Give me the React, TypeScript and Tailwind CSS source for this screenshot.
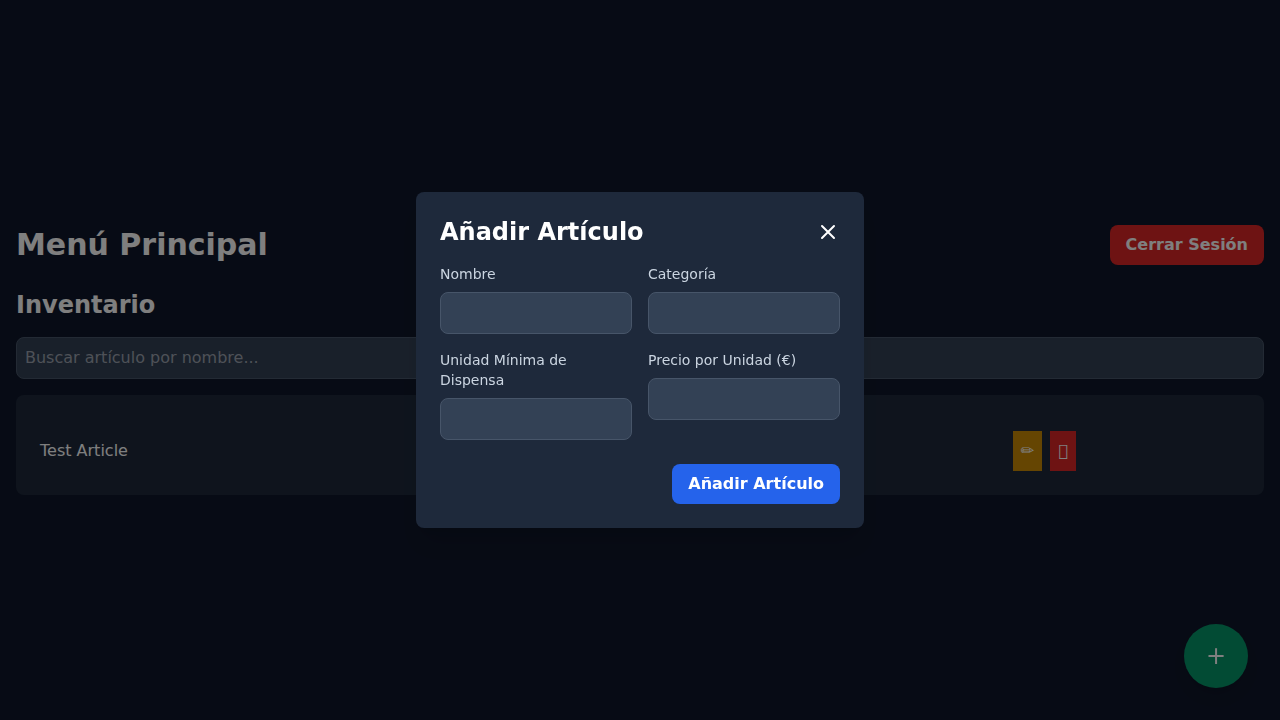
import { useState } from "react";

type Article = {
  name: string;
  category: string;
  unit: string;
  price: string;
};

const articles: Article[] = [
  { name: "Test Article", category: "", unit: "", price: "" },
];

const fields = [
  { id: "nombre", label: "Nombre" },
  { id: "categoria", label: "Categoría" },
  { id: "unidad", label: "Unidad Mínima de Dispensa" },
  { id: "precio", label: "Precio por Unidad (€)" },
];

function Inventory() {
  return (
    <section>
      <h2 className="mb-4 text-2xl font-bold">Inventario</h2>
      <input
        type="text"
        aria-label="Buscar artículo por nombre"
        placeholder="Buscar artículo por nombre..."
        className="mb-4 block w-full rounded-lg border border-[#475569] bg-[#334155] p-2 text-white placeholder:text-[#9ca3af]"
      />
      <div className="rounded-lg bg-[#1e293b] px-4 pt-7 pb-4">
        <table className="w-full table-fixed text-left">
          <tbody>
            {articles.map((article) => (
              <tr key={article.name}>
                <td className="p-2">{article.name}</td>
                <td className="p-2">{article.category}</td>
                <td className="p-2">{article.unit}</td>
                <td className="p-2">{article.price}</td>
                <td className="p-2">
                  <div className="flex gap-2">
                    <button type="button" title="Editar" className="bg-[#ca8a04] p-2">
                      ✏
                    </button>
                    <button type="button" title="Eliminar" className="bg-[#dc2626] p-2">
                      {"\uf1f8"}
                    </button>
                  </div>
                </td>
              </tr>
            ))}
          </tbody>
        </table>
      </div>
    </section>
  );
}

function AddArticleDialog({ onClose }: { onClose: () => void }) {
  return (
    <div className="fixed inset-0 flex items-center justify-center bg-black/50">
      <div
        role="dialog"
        aria-modal="true"
        aria-labelledby="dialog-title"
        className="w-full max-w-md rounded-lg bg-[#1e293b] p-6 shadow-xl"
      >
        <div className="mb-4 flex items-center justify-between">
          <h2 id="dialog-title" className="text-2xl font-bold">
            Añadir Artículo
          </h2>
          <button type="button" aria-label="Cerrar" onClick={onClose}>
            <svg
              className="size-6"
              viewBox="0 0 24 24"
              fill="none"
              stroke="currentColor"
              strokeWidth="2"
              strokeLinecap="round"
              strokeLinejoin="round"
            >
              <path d="M6 18L18 6M6 6l12 12" />
            </svg>
          </button>
        </div>
        <form onSubmit={(event) => event.preventDefault()}>
          <div className="grid grid-cols-2 gap-4">
            {fields.map((field) => (
              <div key={field.id}>
                <label htmlFor={field.id} className="mb-2 block text-sm text-[#cbd5e1]">
                  {field.label}
                </label>
                <input
                  id={field.id}
                  type="text"
                  className="block w-full rounded-lg border border-[#475569] bg-[#334155] p-2"
                />
              </div>
            ))}
          </div>
          <div className="mt-6 flex justify-end">
            <button type="submit" className="rounded-lg bg-[#2563eb] px-4 py-2 font-bold">
              Añadir Artículo
            </button>
          </div>
        </form>
      </div>
    </div>
  );
}

export default function App() {
  const [open, setOpen] = useState(true);

  return (
    <div className="flex min-h-screen flex-col justify-center bg-[#0f172a] px-4 font-['DejaVu_Sans',sans-serif] text-white">
      <header className="mb-6 flex items-center justify-between">
        <h1 className="text-3xl font-bold">Menú Principal</h1>
        <button type="button" className="rounded-lg bg-[#dc2626] px-4 py-2 font-bold">
          Cerrar Sesión
        </button>
      </header>
      <Inventory />
      <button
        type="button"
        aria-label="Añadir artículo"
        onClick={() => setOpen(true)}
        className="fixed right-8 bottom-8 flex size-16 items-center justify-center rounded-full bg-[#059669] text-2xl shadow-lg"
      >
        +
      </button>
      {open && <AddArticleDialog onClose={() => setOpen(false)} />}
    </div>
  );
}
